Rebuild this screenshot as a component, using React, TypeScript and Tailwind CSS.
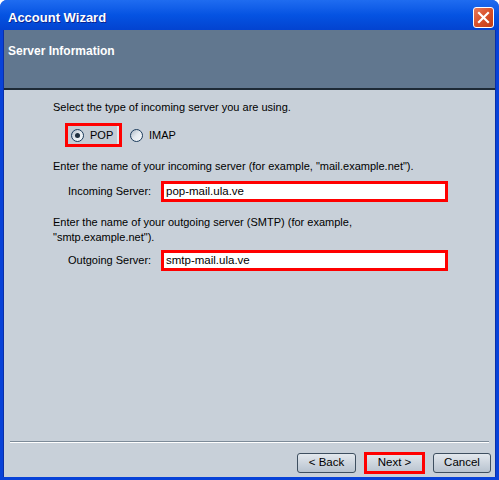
const CloseButton = () => (
  <div className="flex h-[21px] w-[21px] items-center justify-center rounded-[3px] border border-white bg-gradient-to-br from-[#e8795a] via-[#d8502a] to-[#c13d14]">
    <svg width="13" height="13" viewBox="0 0 13 13">
      <path d="M2 2 L11 11 M11 2 L2 11" stroke="white" strokeWidth="2.2" strokeLinecap="square" />
    </svg>
  </div>
);

const Radio = ({ checked }: { checked?: boolean }) => (
  <div className="flex h-[13px] w-[13px] items-center justify-center rounded-full border border-[#1c3c5c] bg-gradient-to-br from-[#aeb9c6] via-[#e6ebf0] to-[#f7f9fb]">
    {checked && <div className="h-[5px] w-[5px] rounded-full bg-[#1f2f3f]" />}
  </div>
);

const Field = ({ label, value }: { label: string; value: string }) => (
  <div className="flex items-center">
    <span className="w-[108px] pl-[15px]">{label}</span>
    <div className="flex h-[21px] w-[287px] items-center border-[3px] border-[#ff0000] bg-white pl-[2px] text-[11.5px]">
      {value}
    </div>
  </div>
);

const Button = ({ children, className = '' }: { children: React.ReactNode; className?: string }) => (
  <div
    className={`flex h-[20px] items-center justify-center rounded-[3px] border border-[#3e4f60] bg-gradient-to-b from-[#e3e8ee] via-[#cdd5de] to-[#b8c3cf] text-[11.5px] ${className}`}
  >
    {children}
  </div>
);

export default function App() {
  return (
    <div className="flex h-[480px] w-[499px] flex-col overflow-hidden rounded-t-[7px] bg-[#0842d8] font-['Liberation_Sans',Arial,sans-serif] text-[11px] text-black">
      <div className="flex h-[30px] shrink-0 items-center justify-between bg-gradient-to-b from-[#1f6cf0] via-[#0553e2] to-[#0343d0] pl-[8px] pr-[5px] pt-[5px]">
        <span className="text-[13px] font-bold text-white [text-shadow:1px_1px_0_#0a2490]">Account Wizard</span>
        <CloseButton />
      </div>
      <div className="flex flex-1 flex-col px-[3px] pb-[3px]">
        <div className="flex flex-1 flex-col border-x border-[#0a2fa8] bg-[#c8d0d9]">
          <div className="h-[60px] border-b-2 border-[#1e2a36] bg-[#61778f] pl-[4px] pt-[12px]">
            <span className="text-[12px] font-bold text-white">Server Information</span>
          </div>
          <div className="flex flex-1 flex-col pl-[49px] pt-[10px] leading-[15px]">
            <p>Select the type of incoming server you are using.</p>
            <div className="mt-[8px] flex items-center">
              <div className="ml-[12px] flex h-[24px] w-[57px] items-center border-[3px] border-[#ff0000] bg-[#c4ccd5]">
                <div className="flex h-full flex-1 items-center gap-[6px] border-r-2 border-[#e4e8ec] pl-[3px]">
                  <Radio checked />
                  <span>POP</span>
                </div>
              </div>
              <div className="ml-[8px] flex items-center gap-[6px]">
                <Radio />
                <span>IMAP</span>
              </div>
            </div>
            <p className="mt-[12px]">Enter the name of your incoming server (for example, "mail.example.net").</p>
            <div className="mt-[7px]">
              <Field label="Incoming Server:" value="pop-mail.ula.ve" />
            </div>
            <p className="mt-[13px] w-[330px]">
              Enter the name of your outgoing server (SMTP) (for example, "smtp.example.net").
            </p>
            <div className="mt-[5px]">
              <Field label="Outgoing Server:" value="smtp-mail.ula.ve" />
            </div>
          </div>
          <div className="mx-[6px] border-t border-b border-t-[#7d8b99] border-b-white" />
          <div className="flex items-center justify-end gap-[8px] pb-[3px] pr-[4px] pt-[9px]">
            <Button className="w-[59px]">&lt; Back</Button>
            <div className="border-[3px] border-[#ff0000]">
              <div className="flex h-[16px] w-[55px] items-center justify-center bg-gradient-to-b from-[#dfe5eb] to-[#bcc6d1] text-[11.5px]">
                Next &gt;
              </div>
            </div>
            <Button className="w-[58px]">Cancel</Button>
          </div>
        </div>
      </div>
    </div>
  );
}
